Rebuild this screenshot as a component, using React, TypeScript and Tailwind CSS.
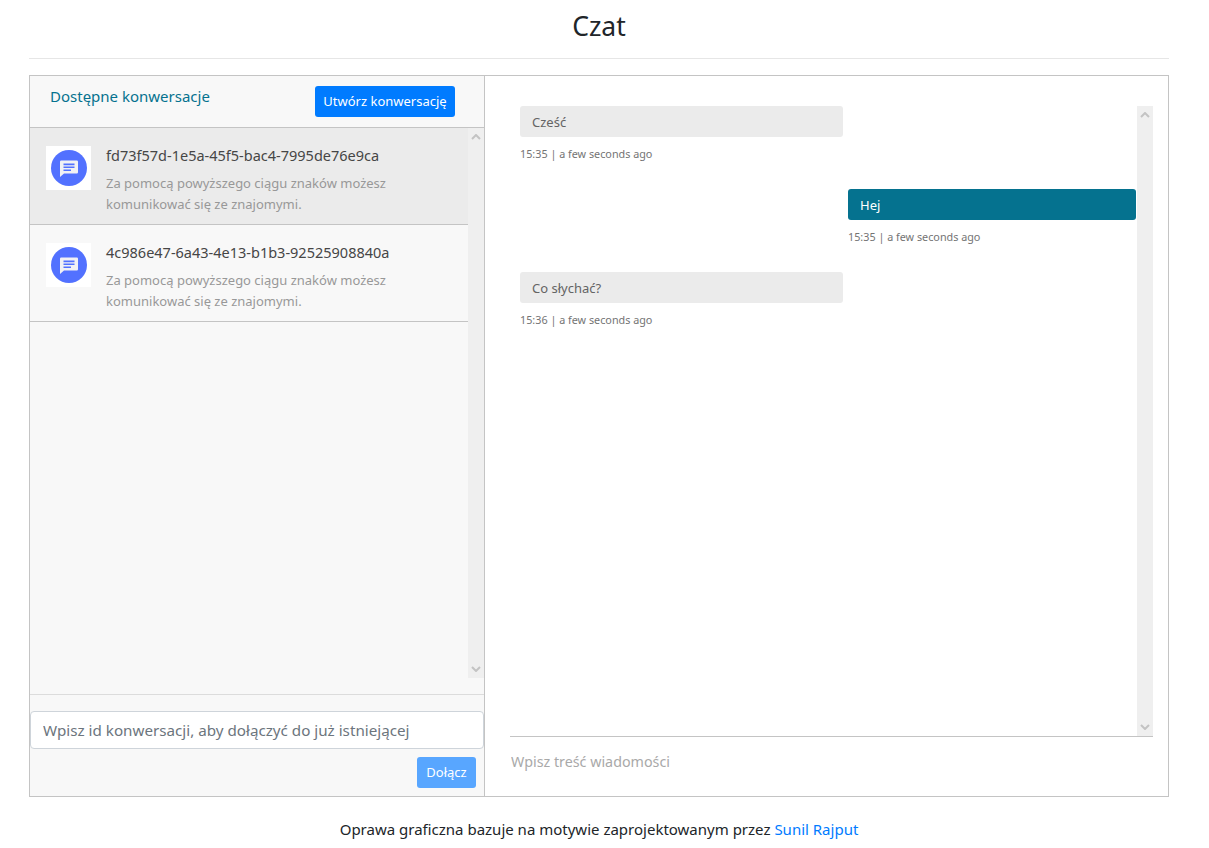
import React from "react";

const FONT = "font-['Noto_Sans','Open_Sans',sans-serif]";

const ChatIcon = () => (
  <div className="flex h-[44px] w-[45px] shrink-0 items-center justify-center bg-white">
    <svg width="36" height="36" viewBox="0 0 36 36">
      <circle cx="18" cy="18" r="18" fill="#5271ff" />
      <path d="M10.2 10.5h15.6a1.2 1.2 0 0 1 1.2 1.2v10.6a1.2 1.2 0 0 1-1.2 1.2H13l-4 3.5V11.7a1.2 1.2 0 0 1 1.2-1.2z" fill="#f1f1f4" />
      <path d="M12.5 13.6h11v1.6h-11zM12.5 16.6h11v1.5h-11zM12.5 19.6h7.5v1.5h-7.5z" fill="#5271ff" />
    </svg>
  </div>
);

const ScrollBar = ({ className }: { className: string }) => (
  <div className={`flex w-[16px] shrink-0 flex-col items-center justify-between py-[6px] ${className}`}>
    <svg width="10" height="6" viewBox="0 0 10 6">
      <path d="M1 5l4-4 4 4" fill="none" stroke="#c3c3c3" strokeWidth="2" />
    </svg>
    <svg width="10" height="6" viewBox="0 0 10 6">
      <path d="M1 1l4 4 4-4" fill="none" stroke="#c3c3c3" strokeWidth="2" />
    </svg>
  </div>
);

const Conversation = ({ id, active }: { id: string; active?: boolean }) => (
  <div className={`flex h-[97px] border-b border-[#c4c4c4] pl-[16px] pt-[18px] ${active ? "bg-[#ebebeb]" : ""}`}>
    <ChatIcon />
    <div className="ml-[15px]">
      <h5 className="-mt-[1px] text-[14.5px] leading-[20px] text-[#464646]">{id}</h5>
      <p className="mt-[8px] text-[13px] leading-[21px] text-[#989898]">
        Za pomocą powyższego ciągu znaków możesz
        <br />
        komunikować się ze znajomymi.
      </p>
    </div>
  </div>
);

const Incoming = ({ text, time }: { text: string; time: string }) => (
  <div className="w-[323px]">
    <div className="flex h-[31px] items-center rounded-[3px] bg-[#ebebeb] px-[12px] pt-[2px] text-[13px] text-[#646464]">{text}</div>
    <p className="mt-[8px] text-[10.8px] leading-[17px] text-[#747474]">{time}</p>
  </div>
);

export default function App() {
  return (
    <div className={`${FONT} h-[848px] bg-white`}>
      <div className="ml-[29px] w-[1140px]">
        <h3 className="h-[59px] border-b border-[#e6e6e6] pt-[7px] text-center text-[26.5px] leading-[38px] text-[#212529]">Czat</h3>
        <div className="mt-[16px] flex h-[722px] border border-[#c4c4c4]">
          <div className="flex w-[455px] shrink-0 flex-col border-r border-[#c4c4c4] bg-[#f8f8f8]">
            <div className="flex h-[52px] shrink-0 justify-between border-b border-[#c4c4c4] pl-[20px] pr-[29px]">
              <h4 className="pt-[9px] text-[15px] leading-[23px] text-[#05728f]">Dostępne konwersacje</h4>
              <button className="mt-[10px] h-[31px] w-[140px] rounded-[3px] bg-[#007bff] text-[13px] text-white">Utwórz konwersację</button>
            </div>
            <div className="flex h-[550px] shrink-0">
              <div className="flex-1">
                <Conversation id="fd73f57d-1e5a-45f5-bac4-7995de76e9ca" active />
                <Conversation id="4c986e47-6a43-4e13-b1b3-92525908840a" />
              </div>
              <ScrollBar className="bg-[#efefef]" />
            </div>
            <div className="mt-[16px] flex-1 border-t border-[#dcdcdc] pt-[16px]">
              <input
                readOnly
                placeholder="Wpisz id konwersacji, aby dołączyć do już istniejącej"
                className="block h-[38px] w-full rounded-[4px] border border-[#ced4da] bg-white px-[12px] text-[15.2px] text-[#495057] outline-none placeholder:text-[#6c757d]"
              />
              <div className="mt-[8px] flex justify-end pr-[8px]">
                <button className="h-[31px] w-[59px] rounded-[3px] bg-[#58a6ff] text-[13px] text-white">Dołącz</button>
              </div>
            </div>
          </div>
          <div className="flex flex-1 flex-col pl-[25px] pr-[15px] pt-[30px]">
            <div className="flex h-[631px] shrink-0 border-b border-[#c4c4c4]">
              <div className="flex-1 pl-[10px]">
                <Incoming text="Cześć" time="15:35 | a few seconds ago" />
                <div className="ml-[328px] mt-[27px] w-[288px]">
                  <div className="flex h-[31px] items-center rounded-[3px] bg-[#05728f] px-[12px] pt-[2px] text-[13px] text-white">Hej</div>
                  <p className="mt-[8px] text-[10.8px] leading-[17px] text-[#747474]">15:35 | a few seconds ago</p>
                </div>
                <div className="mt-[27px]">
                  <Incoming text="Co słychać?" time="15:36 | a few seconds ago" />
                </div>
              </div>
              <ScrollBar className="bg-[#efefef]" />
            </div>
            <input
              readOnly
              placeholder="Wpisz treść wiadomości"
              className="mt-[12px] ml-[1px] block h-[25px] w-full bg-transparent text-[14.3px] outline-none placeholder:text-[#a9a9a9]"
            />
          </div>
        </div>
        <p className="mt-[22px] text-center text-[15px] leading-[20px] text-[#212529]">
          Oprawa graficzna bazuje na motywie zaprojektowanym przez <a className="text-[#007bff]">Sunil Rajput</a>
        </p>
      </div>
    </div>
  );
}
